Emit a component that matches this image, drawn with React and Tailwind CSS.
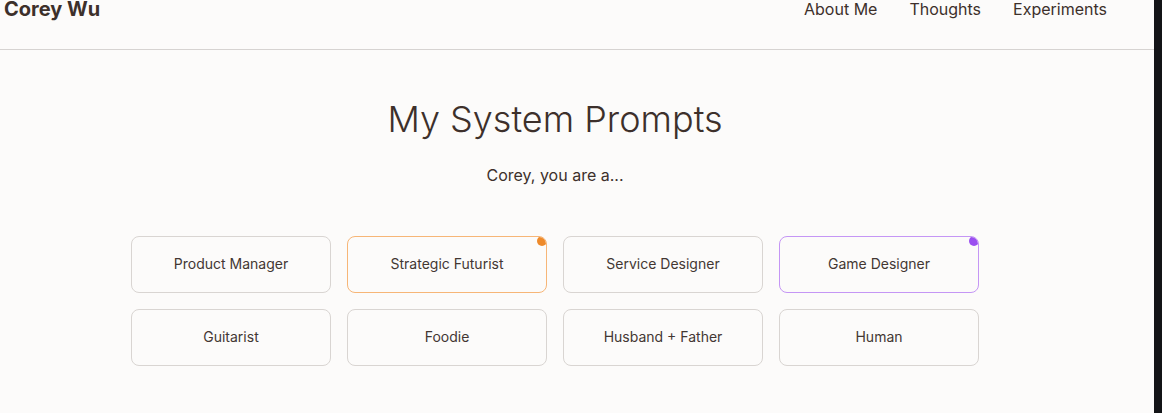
import React from 'react'

const roles = [
  { label: 'Product Manager' },
  { label: 'Strategic Futurist', accent: 'orange' },
  { label: 'Service Designer' },
  { label: 'Game Designer', accent: 'purple' },
  { label: 'Guitarist' },
  { label: 'Foodie' },
  { label: 'Husband + Father' },
  { label: 'Human' },
]

function RoleCard({ label, accent }) {
  const border =
    accent === 'orange'
      ? 'border-[#f7b677]'
      : accent === 'purple'
        ? 'border-[#c596f5]'
        : 'border-[#d9d5d2]'

  return (
    <button
      className={`relative overflow-hidden h-[57px] rounded-lg border ${border} bg-[#fcfbfa] text-[14px] leading-5 pb-[2px] text-[#433733] flex items-center justify-center`}
    >
      {accent === 'orange' && (
        <span className="absolute top-[-1px] right-[-1px] w-[10px] h-[10px] rounded-full bg-[#ee8a2a]" />
      )}
      {accent === 'purple' && (
        <span className="absolute top-[-1px] right-[-1px] w-[10px] h-[10px] rounded-full bg-[#9b4ff0]" />
      )}
      {label}
    </button>
  )
}

export default function App() {
  return (
    <div className="flex h-[413px] overflow-hidden bg-[#fcfbfa] font-['Inter',sans-serif] text-[#3d302b]">
      <div className="flex-1 flex flex-col">
        <header className="border-b border-[#d6d3d1] pb-[26px] pl-1 pr-[47px]">
          <div className="flex items-center justify-between -mt-[5px] h-[28px]">
            <span className="text-[20px] leading-[28px] font-bold">Corey Wu</span>
            <nav className="flex items-center gap-8 text-[16px] leading-6">
              <a>About Me</a>
              <a>Thoughts</a>
              <a>Experiments</a>
            </nav>
          </div>
        </header>

        <main className="flex flex-col items-center pt-[49px] pr-[44px]">
          <h1 className="text-[36px] leading-10 font-light">My System Prompts</h1>
          <p className="mt-[24px] text-[16px] leading-6">Corey, you are a...</p>
          <div className="mt-[49px] grid grid-cols-[repeat(4,200px)] gap-4">
            {roles.map((r) => (
              <RoleCard key={r.label} {...r} />
            ))}
          </div>
        </main>
      </div>
      <div className="w-2 bg-[#131417]" />
    </div>
  )
}
